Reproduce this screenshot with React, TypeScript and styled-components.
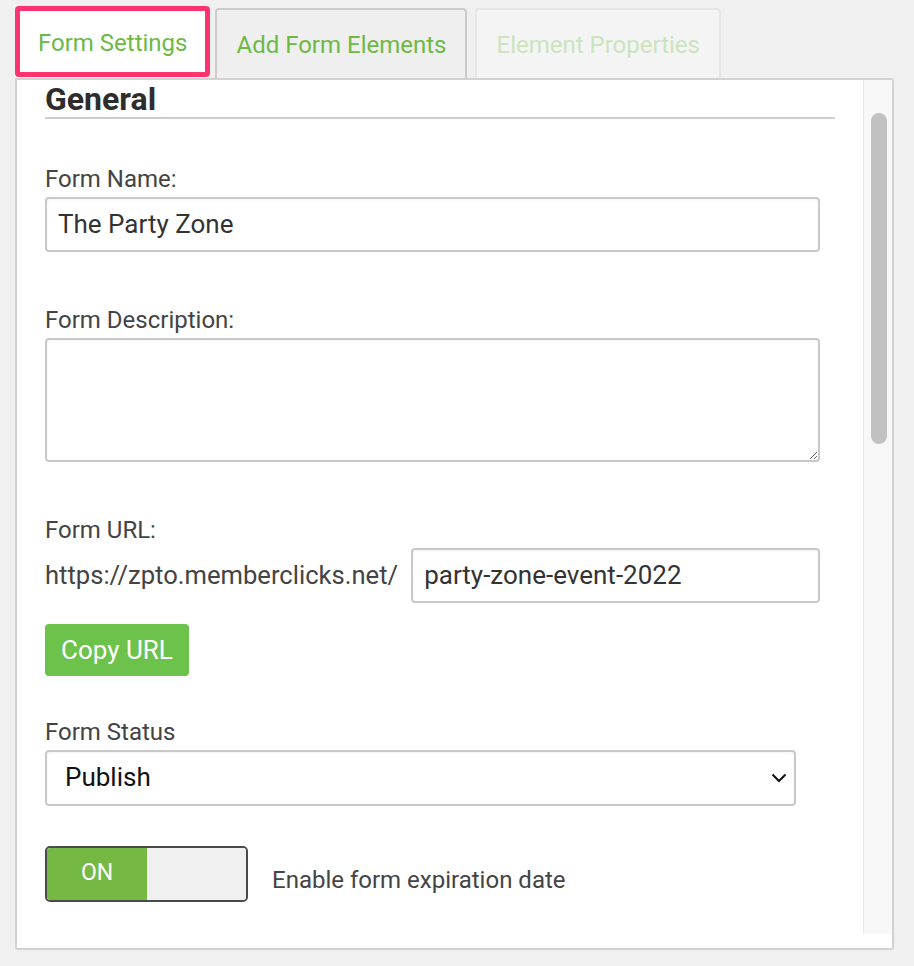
import React from 'react';
import styled, { createGlobalStyle, css } from 'styled-components';

const Global = createGlobalStyle`
  html, body { margin: 0; padding: 0; background: #f0f0f0; }
  body { font-family: Roboto, "Liberation Sans", Arial, sans-serif; }
  *, *::before, *::after { box-sizing: border-box; }
`;

const Page = styled.div`
  width: 914px;
  height: 966px;
  padding: 8px 0 0 15px;
`;

const TabBar = styled.div`
  display: flex;
  align-items: flex-end;
  height: 70px;
`;

type TabKind = 'active' | 'normal' | 'disabled';

const Tab = styled.div<{ $kind: TabKind; $gap?: number }>`
  height: 70px;
  display: flex;
  align-items: center;
  justify-content: center;
  font-size: 24px;
  line-height: 28px;
  white-space: nowrap;
  margin-left: ${(p) => p.$gap ?? 0}px;
  ${(p) =>
    p.$kind === 'active'
      ? css`
          height: 71px;
          border: 5px solid #fe3370;
          border-radius: 4px;
          background: #ffffff;
          color: #6db945;
          padding: 3px 18px 0;
          margin-bottom: 1px;
        `
      : p.$kind === 'normal'
      ? css`
          border: 2px solid #cbcbcb;
          border-bottom: none;
          border-radius: 4px 4px 0 0;
          background: #efefef;
          color: #6db945;
          padding: 2px 19px 0;
        `
      : css`
          border: 2px solid #e6e6e6;
          border-bottom: none;
          border-radius: 4px 4px 0 0;
          background: #f4f4f4;
          color: #cbe4be;
          padding: 2px 19px 0;
        `}
`;

const Panel = styled.div`
  width: 879px;
  height: 872px;
  border: 2px solid #d2d2d2;
  border-radius: 0 3px 3px 3px;
  background: #ffffff;
  padding-bottom: 14px;
  display: flex;
`;

const Content = styled.div`
  flex: 1;
  padding: 1px 28px 0 28px;
  overflow: hidden;
`;

const ScrollTrack = styled.div`
  width: 29px;
  border-left: 1px solid #e8e8e8;
  background: #f8f8f8;
  padding: 33px 0 0 7px;
`;

const ScrollThumb = styled.div`
  width: 16px;
  height: 331px;
  border-radius: 8px;
  background: #c1c1c1;
`;

const Heading = styled.h2`
  margin: 0;
  font-size: 32px;
  line-height: 36px;
  font-weight: 700;
  color: #2d2d2d;
  border-bottom: 2px solid #cdcdcd;
`;

const Form = styled.div`
  width: 775px;
`;

const Field = styled.div<{ $mt: number }>`
  margin-top: ${(p) => p.$mt}px;
  display: flex;
  flex-direction: column;
  align-items: flex-start;
`;

const Label = styled.label`
  font-size: 24px;
  line-height: 28px;
  color: #444444;
  margin-bottom: 4px;
`;

const controlBase = css`
  font-family: Roboto, "Liberation Sans", Arial, sans-serif;
  border: 2px solid #c9c9c9;
  border-radius: 4px;
  background: #ffffff;
  box-shadow: inset 0 1px 3px rgba(0, 0, 0, 0.05);
  outline: none;
`;

const TextInput = styled.input`
  ${controlBase};
  width: 100%;
  height: 55px;
  padding: 0 11px 2px;
  font-size: 26px;
  color: #333333;
`;

const TextArea = styled.textarea`
  ${controlBase};
  width: 100%;
  height: 124px;
  padding: 8px 11px;
  font-size: 26px;
  color: #333333;
  resize: vertical;
  display: block;
`;

const UrlRow = styled.div`
  display: flex;
  align-items: baseline;
  width: 100%;
  gap: 13px;
`;

const UrlPrefix = styled.span`
  font-size: 25.6px;
  color: #444444;
  white-space: nowrap;
`;

const UrlInput = styled(TextInput)`
  flex: 1;
  width: auto;
  min-width: 0;
`;

const CopyButton = styled.button`
  margin-top: 21px;
  height: 52px;
  padding: 0 16px;
  border: none;
  border-radius: 4px;
  background: #6cc24a;
  color: #ffffff;
  font-family: Roboto, "Liberation Sans", Arial, sans-serif;
  font-size: 26px;
  cursor: pointer;
`;

const SelectWrap = styled.div`
  position: relative;
  width: 751px;
`;

const Select = styled.select`
  ${controlBase};
  appearance: none;
  -webkit-appearance: none;
  width: 100%;
  height: 56px;
  padding: 0 40px 2px 18px;
  font-size: 26px;
  color: #111111;
`;

const Chevron = styled.svg`
  position: absolute;
  right: 9px;
  top: 23px;
  pointer-events: none;
`;

const ToggleRow = styled.div`
  margin-top: 40px;
  display: flex;
  align-items: center;
  gap: 24px;
`;

const Toggle = styled.div`
  width: 203px;
  height: 56px;
  border: 2px solid #4a4a4a;
  border-radius: 5px;
  overflow: hidden;
  display: flex;
`;

const ToggleOn = styled.div`
  width: 100px;
  background: #75b843;
  color: #ffffff;
  font-size: 23px;
  display: flex;
  align-items: center;
  justify-content: center;
  padding-bottom: 3px;
`;

const ToggleOff = styled.div`
  flex: 1;
  background: #f0f0f0;
`;

const ToggleText = styled.span`
  font-size: 24px;
  line-height: 28px;
  color: #444444;
  padding-top: 12px;
`;

export default function App() {
  return (
    <Page>
      <Global />
      <TabBar>
        <Tab $kind="active">Form Settings</Tab>
        <Tab $kind="normal" $gap={5}>Add Form Elements</Tab>
        <Tab $kind="disabled" $gap={8}>Element Properties</Tab>
      </TabBar>
      <Panel>
        <Content>
          <Heading>General</Heading>
          <Form>
            <Field $mt={46}>
              <Label>Form Name:</Label>
              <TextInput defaultValue="The Party Zone" />
            </Field>
            <Field $mt={54}>
              <Label>Form Description:</Label>
              <TextArea defaultValue="" />
            </Field>
            <Field $mt={54}>
              <Label>Form URL:</Label>
              <UrlRow>
                <UrlPrefix>https://zpto.memberclicks.net/</UrlPrefix>
                <UrlInput defaultValue="party-zone-event-2022" />
              </UrlRow>
              <CopyButton type="button">Copy URL</CopyButton>
            </Field>
            <Field $mt={42}>
              <Label>Form Status</Label>
              <SelectWrap>
                <Select defaultValue="publish">
                  <option value="publish">Publish</option>
                  <option value="draft">Draft</option>
                </Select>
                <Chevron width="16" height="10" viewBox="0 0 16 10">
                  <polyline points="1.5,1.5 8,8 14.5,1.5" fill="none" stroke="#111" strokeWidth="2" />
                </Chevron>
              </SelectWrap>
            </Field>
            <ToggleRow>
              <Toggle>
                <ToggleOn>ON</ToggleOn>
                <ToggleOff />
              </Toggle>
              <ToggleText>Enable form expiration date</ToggleText>
            </ToggleRow>
          </Form>
        </Content>
        <ScrollTrack>
          <ScrollThumb />
        </ScrollTrack>
      </Panel>
    </Page>
  );
}
